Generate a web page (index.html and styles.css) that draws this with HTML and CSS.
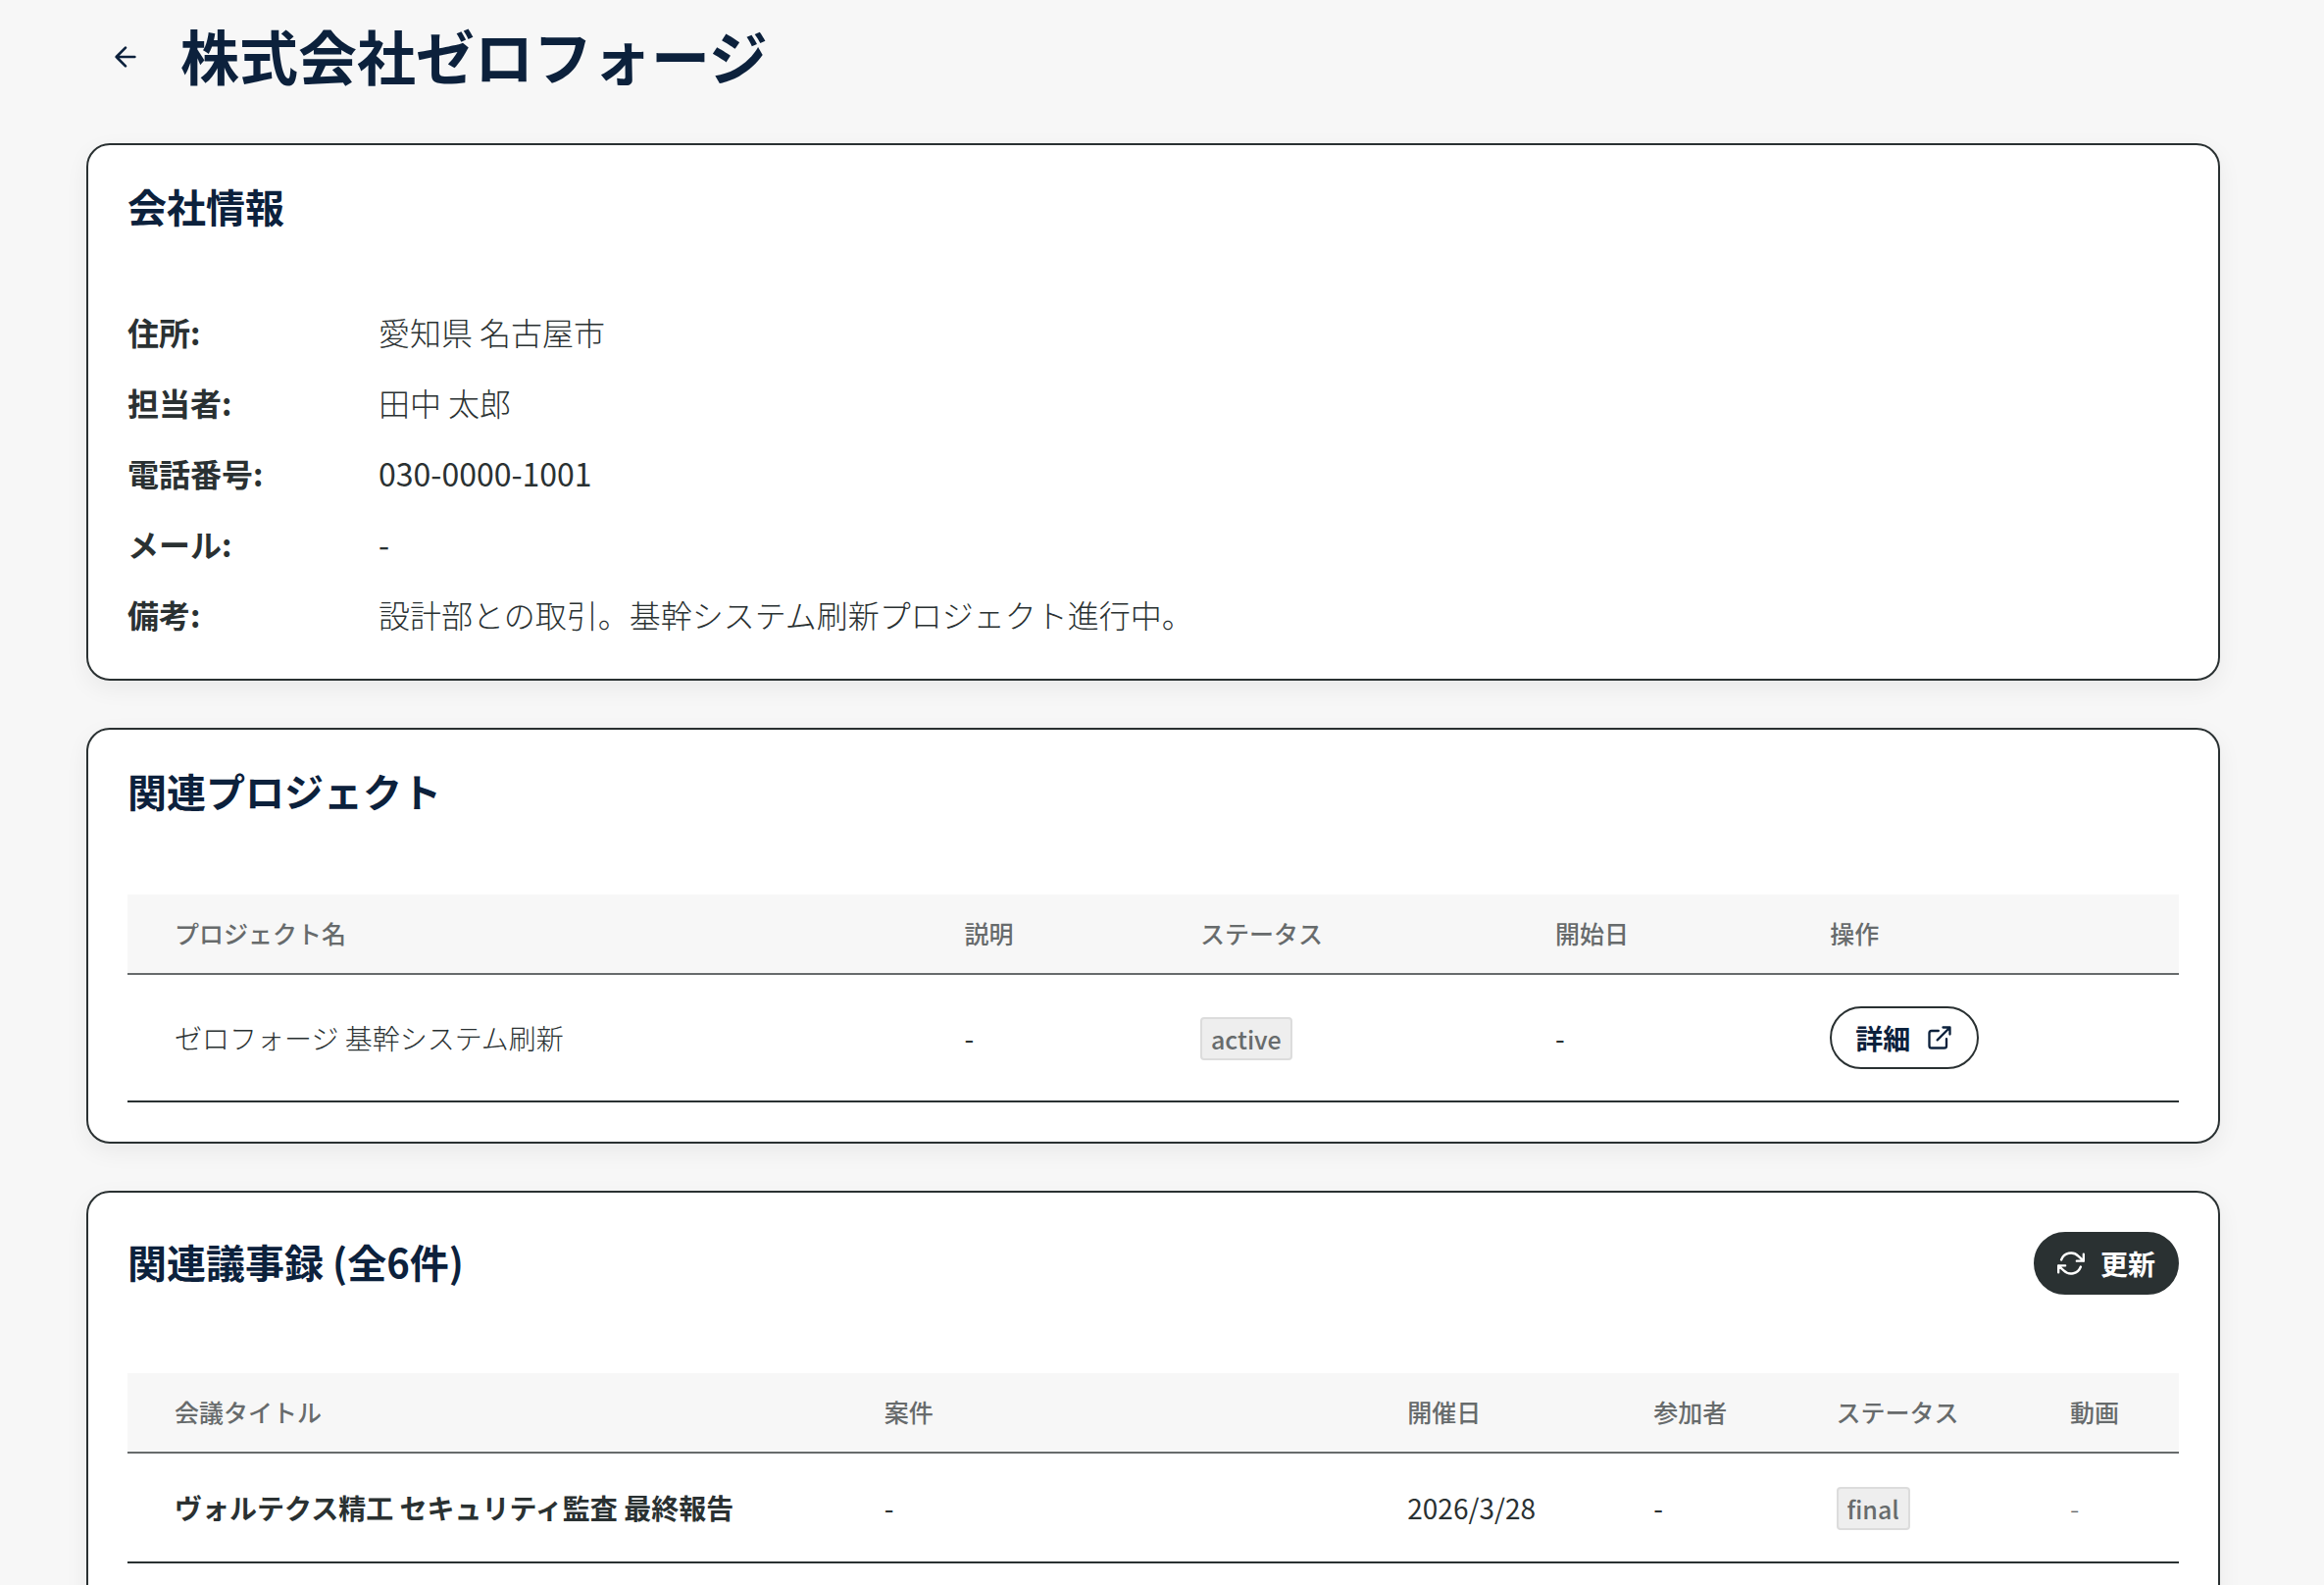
FILE: index.html
```html
<!DOCTYPE html>
<html lang="ja">
  <head>
    <meta charset="UTF-8" />
    <meta name="viewport" content="width=device-width, initial-scale=1.0" />
    <title>株式会社ゼロフォージ</title>
    <link rel="stylesheet" href="styles.css">
  </head>
  <body>
    <main class="page">
      <header class="page-header">
        <a class="back" href="#" aria-label="戻る">
          <svg viewBox="0 0 24 24"><path d="M19 12H5M12 19l-7-7 7-7" /></svg>
        </a>
        <h1>株式会社ゼロフォージ</h1>
      </header>

      <section class="card">
        <div class="card-header">
          <h2>会社情報</h2>
        </div>
        <dl class="info">
          <dt>住所:</dt>
          <dd>愛知県 名古屋市</dd>
          <dt>担当者:</dt>
          <dd>田中 太郎</dd>
          <dt>電話番号:</dt>
          <dd class="num">030-0000-1001</dd>
          <dt>メール:</dt>
          <dd class="num">-</dd>
          <dt>備考:</dt>
          <dd>設計部との取引。基幹システム刷新プロジェクト進行中。</dd>
        </dl>
      </section>

      <section class="card">
        <div class="card-header">
          <h2>関連プロジェクト</h2>
        </div>
        <table class="projects">
          <thead>
            <tr>
              <th class="name">プロジェクト名</th>
              <th class="desc">説明</th>
              <th class="status">ステータス</th>
              <th class="start">開始日</th>
              <th>操作</th>
            </tr>
          </thead>
          <tbody>
            <tr>
              <td>ゼロフォージ 基幹システム刷新</td>
              <td class="num">-</td>
              <td><span class="badge">active</span></td>
              <td class="num">-</td>
              <td>
                <button type="button" class="btn btn-outline">
                  詳細
                  <svg viewBox="0 0 24 24"><path d="M15 3h6v6M10 14L21 3M18 13v6a2 2 0 0 1-2 2H5a2 2 0 0 1-2-2V8a2 2 0 0 1 2-2h6" /></svg>
                </button>
              </td>
            </tr>
          </tbody>
        </table>
      </section>

      <section class="card minutes-card">
        <div class="card-header">
          <h2>関連議事録 (全6件)</h2>
          <button type="button" class="btn btn-dark">
            <svg viewBox="0 0 24 24"><path d="M23 4v6h-6M1 20v-6h6M3.510 9a9 9 0 0 1 14.850-3.360L23 10M1 14l4.640 4.360A9 9 0 0 0 20.490 15" /></svg>
            更新
          </button>
        </div>
        <table class="minutes">
          <thead>
            <tr>
              <th class="title">会議タイトル</th>
              <th class="matter">案件</th>
              <th class="date">開催日</th>
              <th class="people">参加者</th>
              <th class="status">ステータス</th>
              <th>動画</th>
            </tr>
          </thead>
          <tbody>
            <tr>
              <td class="strong">ヴォルテクス精工 セキュリティ監査 最終報告</td>
              <td class="num">-</td>
              <td class="num">2026/3/28</td>
              <td class="num">-</td>
              <td><span class="badge">final</span></td>
              <td class="muted">-</td>
            </tr>
          </tbody>
        </table>
      </section>
    </main>
  </body>
</html>
```
FILE: styles.css
```css
* {
  box-sizing: border-box;
}
body {
  margin: 0;
  background: #f7f7f7;
  color: #2a3132;
  font-family: "Noto Sans CJK JP", sans-serif;
  font-size: 28px;
}
h1,
h2 {
  margin: 0;
  padding-bottom: 4px;
  color: #0c213c;
  font-weight: 700;
}
.page {
  padding: 16px 106px 48px 88px;
}
.page-header {
  display: flex;
  align-items: center;
  gap: 32px;
  padding-left: 16px;
  margin-bottom: 46px;
}
.page-header h1 {
  font-size: 60px;
  line-height: 80px;
}
.back {
  display: flex;
  padding: 8px;
  color: #0c213c;
}
svg {
  width: 28px;
  height: 28px;
  fill: none;
  stroke: currentColor;
  stroke-width: 2;
  stroke-linecap: round;
  stroke-linejoin: round;
}
.back svg {
  width: 32px;
  height: 32px;
}
.card {
  margin-bottom: 48px;
  padding: 40px;
  background: #fff;
  border: 2px solid #2a3132;
  border-radius: 24px;
  box-shadow: 0 8px 24px rgba(0, 0, 0, 0.06);
}
.minutes-card {
  padding-bottom: 80px;
}
.card-header {
  display: flex;
  align-items: center;
  justify-content: space-between;
  margin-bottom: 80px;
}
.card-header h2 {
  font-size: 40px;
  line-height: 44px;
}
.info {
  display: grid;
  grid-template-columns: 240px 1fr;
  gap: 24px 16px;
  margin: 0;
  font-size: 32px;
  line-height: 44px;
}
.info dt,
.info dd {
  padding-bottom: 4px;
}
.info dt {
  font-weight: 700;
}
.info dd {
  margin: 0;
  font-weight: 300;
}
table {
  width: 100%;
  table-layout: fixed;
  border-collapse: separate;
  border-spacing: 0;
}
th,
td {
  text-align: left;
  white-space: nowrap;
}
th {
  padding: 20px 0 22px 48px;
  background: #f7f7f7;
  border-bottom: 2px solid #676b6c;
  color: #676b6c;
  font-size: 25px;
  font-weight: 500;
  line-height: 38px;
}
td {
  padding: 32px 0 32px 48px;
  border-bottom: 2px solid #2a3132;
  font-weight: 300;
  line-height: 46px;
}
td.strong {
  font-weight: 700;
}
td.num,
.info dd.num {
  font-weight: 400;
}
.muted {
  color: #676b6c;
}
.projects .name {
  width: 38.5%;
}
.projects .desc {
  width: 11.5%;
}
.projects .status {
  width: 17.3%;
}
.projects .start {
  width: 13.4%;
}
.minutes .title {
  width: 34.6%;
}
.minutes .matter {
  width: 25.5%;
}
.minutes .date {
  width: 12%;
}
.minutes .people {
  width: 8.9%;
}
.minutes .status {
  width: 11.4%;
}
.badge {
  display: block;
  width: fit-content;
  margin-top: 2px;
  padding: 0 9px;
  background: #eee;
  border: 2px solid #dcdcdc;
  border-radius: 4px;
  color: #676b6c;
  font-size: 25px;
  font-weight: 500;
  line-height: 40px;
}
.btn {
  display: flex;
  align-items: center;
  gap: 16px;
  height: 64px;
  padding: 0 24px;
  border: 2px solid #2a3132;
  border-radius: 32px;
  font-family: inherit;
  font-size: 28px;
  font-weight: 700;
}
.btn-outline {
  background: #fff;
  color: #0c213c;
}
.btn-dark {
  padding: 0 22px;
  background: #2a3132;
  color: #fff;
}
```
